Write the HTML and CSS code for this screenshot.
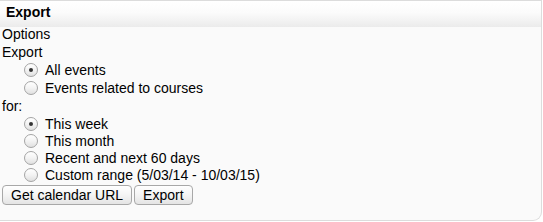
FILE: index.html
```html
<!DOCTYPE html>
<html lang="en">
<head>
    <meta charset="UTF-8">
    <title>Export</title>
    <link rel="stylesheet" href="styles.css">
</head>
<body>
    <div class="block">
        <div class="block-header">Export</div>
        <form class="block-content">
            <div class="legend">Options</div>
            <div class="row">Export</div>
            <div class="group">
                <label class="radio-row"><input type="radio" name="what" checked> All events</label>
                <label class="radio-row"><input type="radio" name="what"> Events related to courses</label>
            </div>
            <div class="row">for:</div>
            <div class="group group-tight">
                <label class="radio-row"><input type="radio" name="time" checked> This week</label>
                <label class="radio-row"><input type="radio" name="time"> This month</label>
                <label class="radio-row"><input type="radio" name="time"> Recent and next 60 days</label>
                <label class="radio-row"><input type="radio" name="time"> Custom range (5/03/14 - 10/03/15)</label>
            </div>
            <div class="buttons">
                <button type="button">Get calendar URL</button>
                <button type="button">Export</button>
            </div>
        </form>
    </div>
</body>
</html>
```
FILE: styles.css
```css
body {
    margin: 0;
    padding: 0;
    font-family: "Liberation Sans", Arial, sans-serif;
    font-size: 14px;
    color: #000;
    background: #fff;
}

.block {
    width: 541px;
    height: 219px;
    border-top: 1px solid #dcdcdc;
    border-right: 1px solid #dcdcdc;
    border-bottom: 1px solid #dcdcdc;
    border-bottom-right-radius: 9px;
    background-color: #fafafa;
    overflow: hidden;
}

.block-header {
    height: 26px;
    line-height: 22px;
    padding-left: 6px;
    font-weight: bold;
    background: linear-gradient(to bottom, #ffffff 0%, #fbfbfb 45%, #ebebeb 100%);
}

.block-content {
    padding: 0 2px;
}

.legend {
    height: 14px;
    line-height: 14px;
    margin-bottom: 2px;
}

.row {
    height: 18px;
    line-height: 18px;
}

.group {
    padding-left: 22px;
}

.radio-row {
    display: flex;
    align-items: center;
    height: 18px;
    gap: 7px;
}

.group-tight .radio-row {
    height: 17px;
}

.radio-row input {
    appearance: none;
    -webkit-appearance: none;
    width: 14px;
    height: 14px;
    margin: 0;
    border: 1px solid #a4a4a4;
    border-radius: 50%;
    background: linear-gradient(to bottom, #ffffff 0%, #f3f3f3 50%, #e0e0e0 100%);
    position: relative;
}

.radio-row input:checked::after {
    content: "";
    position: absolute;
    left: 4px;
    top: 4px;
    width: 4px;
    height: 4px;
    border-radius: 50%;
    background: #333;
}

.buttons {
    display: flex;
    gap: 2px;
    margin-top: 2px;
}

button {
    font-family: "Liberation Sans", Arial, sans-serif;
    font-size: 14px;
    color: #000;
    height: 20px;
    padding: 0 8px;
    border: 1px solid #a8a8a8;
    border-radius: 4px;
    background: linear-gradient(to bottom, #ffffff 0%, #f4f4f4 50%, #e4e4e4 100%);
}
```
